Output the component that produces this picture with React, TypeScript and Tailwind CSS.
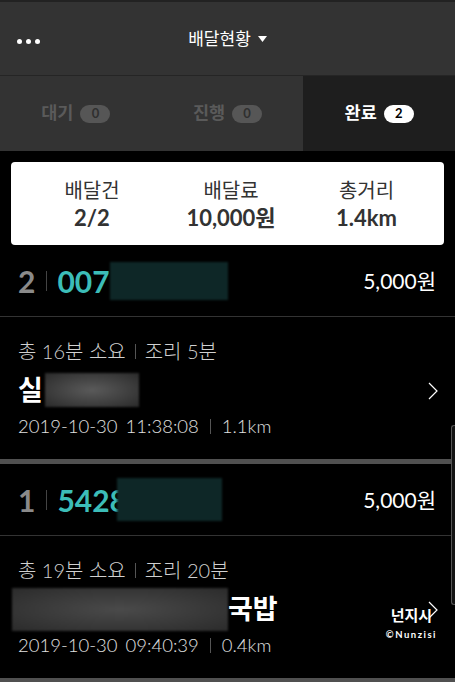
const font = "font-['Lato','Noto_Sans_CJK_KR',sans-serif]";

type Order = {
  no: number;
  idPrefix: string;
  idBlur: string;
  price: string;
  total: string;
  cook: string;
  name: "a" | "b";
  date: string;
  time: string;
  dist: string;
};

const orders: Order[] = [
  { no: 2, idPrefix: "007", idBlur: "w-[118px]", price: "5,000원", total: "16", cook: "5", name: "a", date: "2019-10-30", time: "11:38:08", dist: "1.1km" },
  { no: 1, idPrefix: "5428", idBlur: "-ml-[10px] w-[105px] h-[43px]", price: "5,000원", total: "19", cook: "20", name: "b", date: "2019-10-30", time: "09:40:39", dist: "0.4km" },
];

const Badge = ({ n, active }: { n: number; active?: boolean }) => (
  <span
    className={`ml-[7px] inline-flex h-[18px] w-[30px] items-center justify-center rounded-full text-[13px] font-bold ${
      active ? "bg-white text-black" : "bg-[#565656] text-[#2f2f2f]"
    }`}
  >
    {n}
  </span>
);

const OrderBlock = ({ o }: { o: Order }) => (
  <div>
    <div className="flex h-[72px] items-center justify-between border-b border-[#333] pl-[18px] pr-[19px]">
      <div className="flex items-center">
        <span className="text-[30px] font-bold leading-none text-[#8a8a8a]">{o.no}</span>
        <span className="ml-[11px] mr-[10px] h-[20px] w-px bg-[#444]" />
        <span className="text-[30px] font-bold leading-none text-[#3cbdb8]">{o.idPrefix}</span>
        <span className={`h-[38px] ${o.idBlur} bg-[#0e2727] blur-[1px]`} />
      </div>
      <span className="text-[21px] text-white">{o.price}</span>
    </div>
    <div className="relative px-[18px] pb-[21px] pt-[21px]">
      <div className="flex items-center text-[20px] font-light leading-[26px] text-[#d0d0d0]">
        <span>총 {o.total}분 소요</span>
        <span className="mx-[9px] h-[15px] w-px bg-[#555]" />
        <span>조리 {o.cook}분</span>
      </div>
      <div className="mt-[9px] flex h-[34px] items-center text-[27px] font-bold text-white">
        {o.name === "a" ? (
          <>
            <span>실</span>
            <span className="ml-[2px] h-[34px] w-[94px] bg-[radial-gradient(ellipse_at_center,#5a5a5a,#2a2a2a)] blur-[1px]" />
          </>
        ) : (
          <>
            <span className="-ml-[6px] h-[43px] w-[216px] bg-[radial-gradient(ellipse_at_center,#4a4a4a,#2b2b2b)] blur-[1px]" />
            <span>국밥</span>
          </>
        )}
      </div>
      <div className="mt-[7px] flex items-center text-[18.5px] font-light leading-[24px] text-[#e0e0e0]">
        <span>{o.date}</span>
        <span className="ml-[8px]">{o.time}</span>
        <span className="mx-[11px] h-[15px] w-px bg-[#555]" />
        <span>{o.dist}</span>
      </div>
      <svg
        className="absolute right-[17px] top-[65px]"
        width="10"
        height="18"
        viewBox="0 0 10 18"
      >
        <path d="M1 1L9 9L1 17" fill="none" stroke="#fff" strokeWidth="1.2" />
      </svg>
    </div>
    <div className="h-[5px] bg-[#505050]" />
  </div>
);

export default function App() {
  return (
    <div className={`relative h-[682px] w-[455px] overflow-hidden bg-black ${font}`}>
      <div className="h-[2px] bg-[#222]" />
      <header className="relative flex h-[74px] items-center justify-center border-b border-[#252525] bg-[#333]">
        <div className="absolute left-[17px] top-[37px] flex gap-[4px]">
          <span className="h-[5px] w-[5px] rounded-full bg-white" />
          <span className="h-[5px] w-[5px] rounded-full bg-white" />
          <span className="h-[5px] w-[5px] rounded-full bg-white" />
        </div>
        <div className="flex items-center text-[17px] text-white">
          <span>배달현황</span>
          <svg className="ml-[7px]" width="9" height="6" viewBox="0 0 9 6">
            <path d="M0 0H9L4.5 6Z" fill="#fff" />
          </svg>
        </div>
      </header>
      <nav className="grid h-[75px] grid-cols-3 bg-[#333]">
        <div className="flex items-center justify-center text-[17.5px] font-bold text-[#5a5a5a]">
          대기<Badge n={0} />
        </div>
        <div className="flex items-center justify-center text-[17.5px] font-bold text-[#5a5a5a]">
          진행<Badge n={0} />
        </div>
        <div className="flex items-center justify-center bg-[#1e1e1e] text-[17.5px] font-bold text-white">
          완료<Badge n={2} active />
        </div>
      </nav>
      <div className="px-[11px] pt-[11px]">
        <div className="grid h-[83px] grid-cols-[162px_116px_1fr] items-center rounded-[4px] bg-white text-[#333]">
          {[
            ["배달건", "2/2"],
            ["배달료", "10,000원"],
            ["총거리", "1.4km"],
          ].map(([k, v]) => (
            <div key={k} className="flex flex-col items-center">
              <span className="text-[20px] leading-[28px]">{k}</span>
              <span className="text-[22px] font-bold leading-[28px]">{v}</span>
            </div>
          ))}
        </div>
      </div>
      {orders.map((o) => (
        <OrderBlock key={o.no} o={o} />
      ))}
      <div className="absolute right-[18px] top-[606px] flex flex-col items-center text-white">
        <span className="text-[15px] font-bold leading-[18px]">넌지시</span>
        <span className="mt-[4px] text-[9.5px] font-bold tracking-[1.5px]">©Nunzisi</span>
      </div>
      <div className="absolute right-0 top-[425px] h-[180px] w-[4px] rounded-l-[3px] border border-r-0 border-[#555] bg-[#141414]" />
    </div>
  );
}
